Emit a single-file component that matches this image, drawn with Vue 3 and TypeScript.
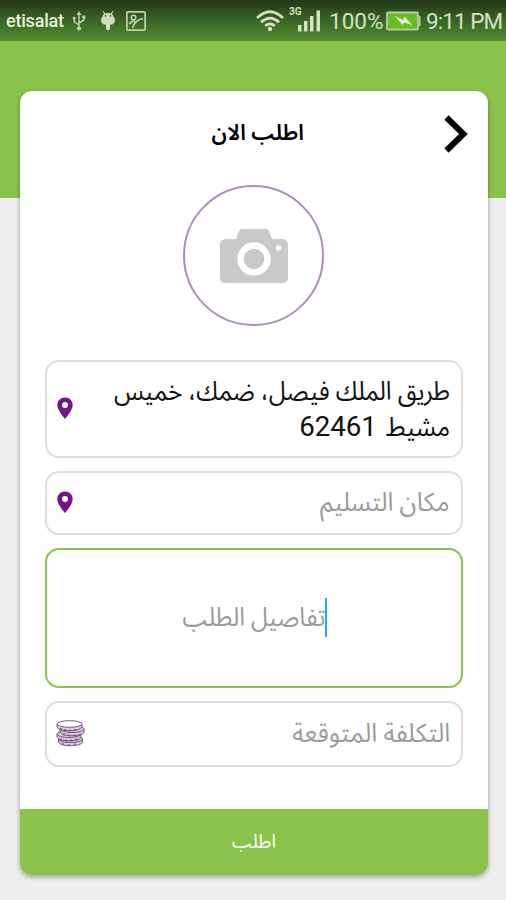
<script setup lang="ts">
import { ref } from 'vue'

interface Line {
  text: string
  digits?: string
}

interface Field {
  id: string
  lines: Line[]
  icon: 'pin' | 'coins' | null
  filled: boolean
  focused: boolean
}

const fields = ref<Field[]>([
  {
    id: 'address',
    lines: [{ text: 'طريق الملك فيصل، ضمك، خميس' }, { text: 'مشيط', digits: '62461' }],
    icon: 'pin',
    filled: true,
    focused: false,
  },
  { id: 'delivery', lines: [{ text: 'مكان التسليم' }], icon: 'pin', filled: false, focused: false },
  { id: 'details', lines: [{ text: 'تفاصيل الطلب' }], icon: null, filled: false, focused: true },
  { id: 'cost', lines: [{ text: 'التكلفة المتوقعة' }], icon: 'coins', filled: false, focused: false },
])
</script>

<template>
  <div class="screen">
    <header class="status">
      <span class="carrier">etisalat</span>
      <svg class="usb" width="14" height="20" viewBox="0 0 14 20" fill="none" stroke="#bdd2ad" stroke-width="1.500">
        <path d="M7 17V3M7 14L2.200 10.500V7M7 12L11.800 9V6" />
        <path d="M7 0L9.500 4H4.500Z" fill="#bdd2ad" stroke="none" />
        <circle cx="7" cy="17.500" r="2.100" fill="#bdd2ad" stroke="none" />
        <circle cx="2.200" cy="7" r="1.600" fill="#bdd2ad" stroke="none" />
        <path d="M10.300 4.500h3v3h-3z" fill="#bdd2ad" stroke="none" />
      </svg>
      <svg class="droid" width="14" height="20" viewBox="0 0 14 20" fill="#cfdfc3">
        <path d="M2 0.500L4 3M12 0.500L10 3" stroke="#cfdfc3" stroke-width="1.200" />
        <path d="M1.500 6C1.500 0.800 12.500 0.800 12.500 6L13.800 7.500V11L11.500 13.500H9V18Q7 20.500 5 18V13.500H2.500L0.200 11V7.500Z" />
        <circle cx="4.600" cy="4.800" r="0.900" fill="#3b6426" />
        <circle cx="9.400" cy="4.800" r="0.900" fill="#3b6426" />
      </svg>
      <svg class="photo" width="20" height="20" viewBox="0 0 20 20" fill="none" stroke="#bdd2ad" stroke-width="1.700">
        <rect x="0.900" y="0.900" width="18.200" height="18.200" rx="1" />
        <circle cx="7.500" cy="6.500" r="2.300" stroke-width="1.500" />
        <path d="M3 13L7.500 9.500L10 12M6.500 17Q9 9 17 7.500" stroke-width="1.700" />
      </svg>
      <span class="grow"></span>
      <svg class="wifi" width="28" height="22" viewBox="0 0 28 22" fill="none" stroke="#d3e2c7" stroke-width="2.700">
        <path d="M1 8Q14 -4.500 27 8M5 12.300Q14 4 23 12.300M9.200 16Q14 11.800 18.800 16" />
        <circle cx="14" cy="19" r="2.200" fill="#d3e2c7" stroke="none" />
      </svg>
      <div class="signal">
        <span class="net">3G</span>
        <svg width="24" height="22" viewBox="0 0 24 22" fill="#d3e2c7">
          <path d="M1 15h3.500v6.500H1zM7 11h3.500v10.500H7zM13 6h3.500v15.500H13zM19.500 0.500H23v21h-3.500z" />
        </svg>
      </div>
      <span class="percent">100%</span>
      <svg class="battery" width="35" height="20" viewBox="0 0 35 20">
        <rect x="1" y="1.500" width="31" height="17" rx="1" fill="#6abd20" stroke="#b7c9ac" stroke-width="1.800" />
        <path d="M33 5h1.500v10H33z" fill="#b7c9ac" />
        <path d="M9 5L17 9L18.500 5.500L26 14L18 11.500L16.500 14Z" fill="#e2efd5" />
      </svg>
      <span class="clock">9:11 PM</span>
    </header>

    <main class="card">
      <div class="titlebar">
        <h1><span class="ar">اطلب الان</span></h1>
        <svg class="arrow" width="26" height="38" viewBox="0 0 26 38" fill="none" stroke="#000" stroke-width="6">
          <path d="M2.500 2.500L19.500 19L2.500 35.500" />
        </svg>
      </div>

      <div class="avatar">
        <svg width="68" height="54" viewBox="0 0 68 54">
          <path d="M6 10H16L19 2Q20 0 22 0H46Q48 0 49 2L52 10H62Q68 10 68 16V48Q68 54 62 54H6Q0 54 0 48V16Q0 10 6 10Z" fill="#c9c9c9" />
          <circle cx="34" cy="30" r="13.500" fill="#c9c9c9" stroke="#fff" stroke-width="6.500" />
          <circle cx="58.500" cy="19" r="2.700" fill="#fff" />
        </svg>
      </div>

      <form class="fields">
        <div v-for="f in fields" :key="f.id" class="field" :class="[f.id, { filled: f.filled, focused: f.focused }]">
          <svg v-if="f.icon === 'pin'" class="pin" width="16" height="23" viewBox="0 0 16 23">
            <path d="M8 0.500C3.500 0.500 0.300 3.800 0.300 8C0.300 13.500 8 22 8 22S15.700 13.500 15.700 8C15.700 3.800 12.500 0.500 8 0.500ZM8 5A3 3 0 1 1 8 11A3 3 0 1 1 8 5Z" fill="#741489" />
          </svg>
          <svg v-if="f.icon === 'coins'" class="coins" width="29" height="27" viewBox="0 0 29 27" fill="#dccbe1" stroke="#75547f" stroke-width="1">
            <path d="M2.500 19v3c1 5 23 5 24 0v-3" />
            <ellipse cx="14.500" cy="19" rx="12" ry="3.500" />
            <path d="M1 14v3c1 5 23 5 24 0v-3" />
            <ellipse cx="13" cy="14" rx="12" ry="3.500" />
            <path d="M4 9v3c1 5 23 5 24 0V9" />
            <ellipse cx="16" cy="9" rx="12" ry="3.500" />
            <path d="M1 4v3c1 5 24 5 25 0V4" />
            <ellipse cx="13.500" cy="4" rx="12.500" ry="3.300" fill="#fff" />
            <path d="M5 8v2M9 9v2M14 9.500v2M19 9v2M8 13.500v2M13 14.500v2M19 14.500v2M24 13.500v2M5 18.500v2M10 19.500v2M15 19.500v2M20 18.500v2M7 23v2M13 24v2M19 23.500v2" stroke-width="1.400" />
          </svg>
          <div class="copy">
            <div v-for="(line, i) in f.lines" :key="i" class="line">
              <span class="ar">{{ line.text }}</span>
              <span v-if="line.digits" class="digits">{{ line.digits }}</span>
            </div>
            <i v-if="f.focused" class="caret"></i>
          </div>
        </div>
      </form>

      <button class="submit" type="button"><span class="ar">اطلب</span></button>
    </main>
  </div>
</template>

<style>
body {
  margin: 0;
  background: #eeeeee;
}
</style>

<style scoped>
.screen {
  box-sizing: border-box;
  width: 506px;
  height: 900px;
  overflow: hidden;
  background: linear-gradient(#8bc34a 0 198px, #eeeeee 198px);
  font-family: Roboto, "Noto Sans Arabic", "DejaVu Sans", sans-serif;
}
.status {
  box-sizing: border-box;
  display: flex;
  align-items: center;
  height: 41px;
  padding: 0 4px 0 6px;
  background: linear-gradient(#21371a, #3a6525 50%, #528c2b);
  color: #d3e2c7;
}
.carrier {
  width: 60px;
  font-size: 18px;
  font-weight: 500;
  letter-spacing: -0.2px;
  color: #e5f3dc;
  white-space: nowrap;
}
.usb { margin-left: 6px; }
.droid { margin-left: 15px; }
.photo { margin-left: 11px; }
.grow { flex: 1; }
.wifi { margin-right: -1px; }
.signal {
  position: relative;
  display: flex;
  justify-content: flex-end;
  width: 31px;
  margin-left: 6px;
}
.signal svg { margin-right: -1px; }
.net {
  position: absolute;
  top: -4px;
  left: 0;
  font-size: 10px;
  font-weight: 700;
}
.percent {
  width: 54px;
  margin-left: 9px;
  font-size: 22.5px;
  white-space: nowrap;
}
.battery { margin-left: 3px; }
.clock {
  width: 76px;
  margin-left: 5px;
  font-size: 22.5px;
  letter-spacing: -0.95px;
  white-space: nowrap;
}
.card {
  display: flex;
  flex-direction: column;
  width: 468px;
  height: 784px;
  margin: 50px 0 0 20px;
  overflow: hidden;
  border-radius: 12px;
  background: #fff;
  box-shadow: 0 2px 5px rgba(0, 0, 0, 0.35);
}
.titlebar {
  display: grid;
  grid-template-columns: 1fr 44px;
  align-items: center;
  height: 86px;
}
h1 {
  margin: 0 0 2px 8px;
  font-size: 22px;
  font-weight: 600;
  text-align: center;
}
h1 .ar {
  margin-left: 42px;
  transform: scaleX(0.985);
}
.ar {
  display: inline-block;
  direction: rtl;
  transform-origin: right center;
  white-space: nowrap;
}
.avatar {
  box-sizing: border-box;
  display: flex;
  align-items: center;
  justify-content: center;
  width: 141px;
  height: 141px;
  margin: 8px 0 0 163px;
  border: 2px solid #ac8fb8;
  border-radius: 50%;
}
.fields {
  display: flex;
  flex-direction: column;
  gap: 13px;
  margin: 34px 25px 0;
}
.field {
  box-sizing: border-box;
  display: flex;
  align-items: center;
  border: 2px solid #dedede;
  border-radius: 14px;
  padding: 0 11px 0 10px;
}
.field.address { height: 98px; }
.field.delivery { height: 64px; }
.field.details { height: 140px; justify-content: center; }
.field.cost { height: 66px; }
.field.focused { border-color: #8bc34a; }
.pin { margin-top: -1px; }
.coins { margin: -2px 0 0 -1px; }
.copy {
  flex: 1;
  margin-top: -3px;
  color: #9b9b9b;
  font-size: 26px;
}
.filled .copy { color: #111; }
.line {
  display: flex;
  direction: rtl;
  align-items: baseline;
  height: 34px;
  line-height: 34px;
}
.address .ar { transform: scaleX(0.936); }
.address .line + .line { gap: 6px; }
.address .line + .line .ar { transform: scaleX(0.96); }
.delivery .ar { transform: scaleX(0.956); }
.cost .ar { transform: scaleX(0.968); }
.digits {
  padding-top: 1px;
  font-size: 27.7px;
  line-height: 36px;
}
.details .copy {
  display: flex;
  flex: none;
  align-items: center;
  margin-left: -9px;
}
.details .ar { transform: scaleX(0.926); }
.caret {
  width: 2px;
  height: 39px;
  margin-top: 2px;
  background: #18b5c4;
}
.submit {
  height: 66px;
  margin-top: auto;
  border: 0;
  background: #8bc34a;
  color: #fff;
  font: inherit;
  font-size: 19px;
}
</style>
